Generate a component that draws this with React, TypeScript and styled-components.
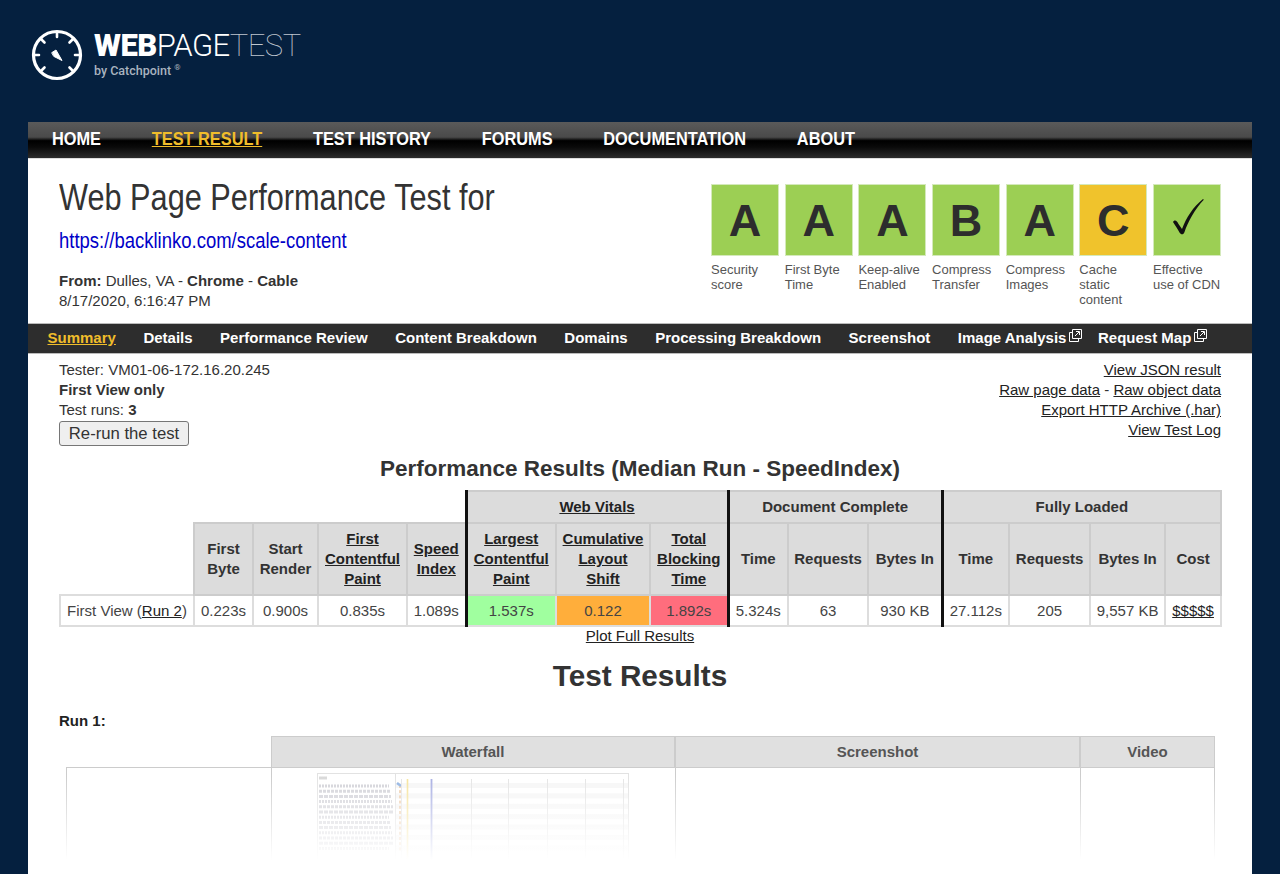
import React from 'react';
import styled, { createGlobalStyle } from 'styled-components';

const Global = createGlobalStyle`
  html, body { margin: 0; padding: 0; height: 874px; overflow: hidden; background: #05203f; }
  body { font-family: "Liberation Sans", Arial, sans-serif; color: #333; }
  * { box-sizing: border-box; }
  a { color: inherit; }
`;

const Page = styled.div`
  width: 1280px;
  height: 874px;
  overflow: hidden;
  padding: 0 28px;
`;

const Masthead = styled.header`
  height: 122px;
  padding: 29px 0 0 3px;
  display: flex;
  align-items: flex-start;
  gap: 11px;
`;

const LogoText = styled.div`
  display: flex;
  flex-direction: column;
  margin-top: 1px;
`;

const Wordmark = styled.div`
  font-family: Roboto, sans-serif;
  font-size: 31px;
  line-height: 32px;
  letter-spacing: -0.52px;
  color: #fff;
  white-space: nowrap;
`;
const WordBold = styled.span`font-weight: 900;`;
const WordLight = styled.span`font-weight: 300;`;
const WordThin = styled.span`font-weight: 100; color: #c0c7d0;`;

const ByLine = styled.div`
  font-family: Roboto, sans-serif;
  font-size: 12.5px;
  line-height: 14px;
  font-weight: 500;
  color: #a9b3bf;
  margin-top: 2px;
`;
const Reg = styled.sup`
  font-size: 8px;
  line-height: 0;
  font-weight: 400;
  margin-left: 3px;
`;

const TopNav = styled.nav`
  height: 37px;
  padding: 0 0 2px 24px;
  display: flex;
  align-items: center;
  background: linear-gradient(#5a5a5a 0%, #4a4a4a 42%, #000 52%, #0a0a0a 70%, #2c2c2c 100%);
  border-bottom: 1px solid #ddd;
`;

const TopRow = styled.div`
  display: flex;
  gap: 59px;
  transform: scaleX(0.86);
  transform-origin: left center;
`;

const TopLink = styled.a<{ $active?: boolean }>`
  font-size: 19px;
  line-height: 24px;
  font-weight: 700;
  color: ${p => (p.$active ? '#f0bd2b' : '#fff')};
  text-decoration: ${p => (p.$active ? 'underline' : 'none')};
  white-space: nowrap;
`;

const Card = styled.main`
  background: #fff;
  height: 715px;
  overflow: hidden;
  position: relative;
`;

const Summary = styled.section`
  height: 164px;
  padding: 18px 31px 0;
  display: flex;
  justify-content: space-between;
`;

const TestInfo = styled.div``;

const Title = styled.h1`
  margin: 0;
  font-size: 36px;
  line-height: 42px;
  font-weight: 400;
  color: #333;
  white-space: nowrap;
  transform: scaleX(0.853);
  transform-origin: left center;
`;

const TestUrl = styled.a`
  display: block;
  margin-top: 9px;
  font-size: 22px;
  line-height: 26px;
  color: #0000c8;
  text-decoration: none;
  white-space: nowrap;
  transform: scaleX(0.84);
  transform-origin: left center;
`;

const Meta = styled.div`
  font-size: 15px;
  line-height: 20px;
  color: #333;
`;
const MetaFirst = styled(Meta)`margin-top: 17px;`;

const Grades = styled.div`
  display: flex;
  gap: 5.67px;
  margin-top: 7px;
`;

const Grade = styled.div`
  width: 68px;
  font-size: 13px;
  line-height: 15px;
  color: #555;
`;

const GradeBox = styled.div<{ $tone: string }>`
  height: 72px;
  margin-bottom: 6px;
  background: ${p => p.$tone};
  border: 1px solid #d4e9bb;
  display: flex;
  align-items: center;
  justify-content: center;
  font-size: 45px;
  font-weight: 700;
  color: #2d2d2d;
`;

const SubNav = styled.nav`
  height: 31px;
  padding: 0 0 1px 19.5px;
  display: flex;
  align-items: center;
  gap: 27.5px;
  background: #2d2d2d;
  border-top: 1px solid #bbb;
  border-bottom: 1px solid #bbb;
`;

const SubLink = styled.a<{ $active?: boolean; $tight?: boolean }>`
  display: inline-flex;
  align-items: flex-start;
  gap: 3px;
  font-size: 15px;
  line-height: 18px;
  font-weight: 700;
  color: ${p => (p.$active ? '#f0bd2b' : '#fff')};
  text-decoration: ${p => (p.$active ? 'underline' : 'none')};
  white-space: nowrap;
  ${p => (p.$tight ? 'margin-left: -12px;' : '')}
`;

const Options = styled.section`
  padding: 6px 31px 0;
  display: flex;
  justify-content: space-between;
`;

const OptionLine = styled.div`
  font-size: 15px;
  line-height: 20px;
  color: #333;
`;

const OptionLinks = styled(OptionLine)`
  text-align: right;
  a { color: #222; }
`;

const Rerun = styled.button`
  display: block;
  margin-top: 1px;
  width: 130px;
  height: 25px;
  padding: 0;
  font-family: inherit;
  font-size: 16.7px;
  color: #333;
  background: #efefef;
  border: 1px solid #767676;
  border-radius: 3px;
`;

const ResultsTitle = styled.h2`
  margin: 8px 0 0;
  height: 32px;
  text-align: center;
  font-size: 22.5px;
  line-height: 30px;
  font-weight: 700;
  color: #333;
`;

const Results = styled.table`
  margin: 4px 0 0 31px;
  width: 1161px;
  table-layout: fixed;
  border-collapse: collapse;
  font-size: 15px;
  color: #444;
`;

const Th = styled.th<{ $thick?: boolean; $h: number; $blank?: boolean }>`
  height: ${p => p.$h}px;
  padding: 0;
  background: ${p => (p.$blank ? 'transparent' : '#dcdcdc')};
  border: ${p => (p.$blank ? 'none' : '2px solid #ccc')};
  ${p => (p.$thick ? 'border-left: 3px solid #111;' : '')}
  font-weight: 700;
  line-height: 20px;
  text-align: center;
  color: #333;
  a { color: #222; }
`;

const Td = styled.td<{ $thick?: boolean; $bg?: string }>`
  height: 31px;
  padding: 0;
  text-align: center;
  background: ${p => p.$bg || '#fff'};
  border: 2px solid #ddd;
  ${p => (p.$thick ? 'border-left: 3px solid #111;' : '')}
  white-space: nowrap;
  a { color: #222; }
`;

const PlotLink = styled.div`
  text-align: center;
  font-size: 15px;
  line-height: 20px;
  margin-top: -1px;
  a { color: #222; }
`;

const BigTitle = styled.h1`
  margin: 11px 0 0;
  text-align: center;
  font-size: 29.7px;
  line-height: 38px;
  font-weight: 700;
  color: #333;
`;

const RunLabel = styled.div`
  margin: 16px 0 0 31px;
  font-size: 15px;
  line-height: 20px;
  font-weight: 700;
  color: #222;
`;

const RunGrid = styled.div`
  margin: 5px 0 0 38px;
  width: 1149px;
  display: grid;
  grid-template-columns: 205px 404px 405px 135px;
  grid-template-rows: 32px 110px;
`;

const RunBlank = styled.div``;

const RunHead = styled.div`
  background: #e0e0e0;
  border: 1px solid #ccc;
  padding-bottom: 1px;
  display: flex;
  align-items: center;
  justify-content: center;
  font-size: 15px;
  font-weight: 700;
  color: #555;
`;

const RunCell = styled.div`
  border-left: 1px solid #ccc;
  display: flex;
  justify-content: center;
  padding-top: 5px;
`;

const RunLead = styled(RunCell)`
  border-top: 1px solid #ccc;
  margin-top: -1px;
`;

const RunCellEnd = styled(RunCell)`
  border-right: 1px solid #ccc;
`;

const Fade = styled.div`
  position: absolute;
  left: 0;
  right: 0;
  bottom: 0;
  height: 100px;
  background: linear-gradient(rgba(255,255,255,0), #fff 86%);
`;

const Gauge = () => (
  <svg width="52" height="52" viewBox="0 0 52 52" fill="none" stroke="#fff" strokeWidth="3.2" strokeLinecap="round" style={{ flex: 'none' }}>
    <circle cx="26" cy="26" r="23.5" />
    <path d="M26 3v5M10 10l3.5 3.5M42 10l-3.5 3.5M3 26h5M44 26h5M10 42l3.5-3.5M42 42l-3.5-3.5" strokeWidth="2.6" />
    <path d="M21 23.5L25 21l6 10.5-8-4z" fill="#fff" stroke="#fff" strokeWidth="1" strokeLinejoin="round" />
  </svg>
);

const External = () => (
  <svg width="13" height="13" viewBox="0 0 13 13" fill="none" stroke="#fff" strokeWidth="1">
    <path d="M3.5 3.5h-3v9h9v-3" />
    <path d="M3.5 9.5v-9h9v9h-9" />
    <path d="M6 7l4-4M7 2.5h3.5V6" />
  </svg>
);

const Check = () => (
  <svg width="34" height="44" viewBox="0 0 34 44" role="img" aria-label="✓">
    <path d="M3 24C5 21 7 23 8.500 26L12 31C16 20 23 9 33 1L33.800 1.800C25 11 18 24 14.500 34C13.500 37 11 37 9.500 34.500C7.500 31 5 27 3 24z" fill="#111" />
  </svg>
);

const Waterfall = () => {
  const rows = Array.from({ length: 13 }, (_, i) => i);
  return (
    <svg width="314" height="94" viewBox="0 0 314 94" fill="none" style={{ marginLeft: 1 }}>
      <rect x="0.5" y="0.5" width="311" height="92" stroke="#e2e2e2" />
      <path d="M78.5 0v93" stroke="#e2e2e2" />
      <path d="M2 5h8" stroke="#d8d8d8" strokeWidth="3" />
      {rows.map(i => (
        <g key={i}>
          <path d={`M2 ${13 + i * 5.2}h${70 + (i * 7) % 6}`} stroke="#d2d2d8" strokeWidth="3" strokeDasharray={`${2 + (i % 3)} 1`} />
          {i % 2 === 0 && <rect x="79" y={10 + i * 5.2} width="232" height="5" fill="#f6f6f6" />}
          <rect x="82" y={12 + i * 5.2} width="2.5" height="3" fill="#efcfae" />
        </g>
      ))}
      <path d="M80 10l4 3" stroke="#8fb2e2" strokeWidth="2.5" />
      <path d="M90.5 6v86" stroke="#f6e39a" strokeWidth="1.6" />
      <path d="M114.5 6v86" stroke="#a8aee2" strokeWidth="1.800" />
      {[84, 154, 191, 230, 268, 306].map(x => (
        <path key={x} d={`M${x}.5 6v86`} stroke="#e4e4e4" />
      ))}
    </svg>
  );
};

const grades: { letter: React.ReactNode; tone: string; label: string[] }[] = [
  { letter: 'A', tone: '#9ccf54', label: ['Security', 'score'] },
  { letter: 'A', tone: '#9ccf54', label: ['First Byte', 'Time'] },
  { letter: 'A', tone: '#9ccf54', label: ['Keep-alive', 'Enabled'] },
  { letter: 'B', tone: '#9ccf54', label: ['Compress', 'Transfer'] },
  { letter: 'A', tone: '#9ccf54', label: ['Compress', 'Images'] },
  { letter: 'C', tone: '#f0c32c', label: ['Cache', 'static', 'content'] },
  { letter: <Check />, tone: '#9ccf54', label: ['Effective', 'use of CDN'] },
];

const widths = [134, 59, 65, 89, 59, 90, 94, 78, 60, 80, 74, 67, 81, 75, 56];

const Lines = ({ items }: { items: string[] }) => (
  <>
    {items.map((t, i) => (
      <React.Fragment key={t}>
        {i > 0 && <br />}
        {t}
      </React.Fragment>
    ))}
  </>
);

export default function App() {
  return (
    <Page>
      <Global />
      <Masthead>
        <Gauge />
        <LogoText>
          <Wordmark>
            <WordBold>WEB</WordBold>
            <WordLight>PAGE</WordLight>
            <WordThin>TEST</WordThin>
          </Wordmark>
          <ByLine>
            by Catchpoint<Reg>®</Reg>
          </ByLine>
        </LogoText>
      </Masthead>
      <TopNav>
        <TopRow>
          <TopLink href="#">HOME</TopLink>
          <TopLink href="#" $active>TEST RESULT</TopLink>
          <TopLink href="#">TEST HISTORY</TopLink>
          <TopLink href="#">FORUMS</TopLink>
          <TopLink href="#">DOCUMENTATION</TopLink>
          <TopLink href="#">ABOUT</TopLink>
        </TopRow>
      </TopNav>
      <Card>
        <Summary>
          <TestInfo>
            <Title>Web Page Performance Test for</Title>
            <TestUrl href="#">https://backlinko.com/scale-content</TestUrl>
            <MetaFirst>
              <b>From:</b> Dulles, VA - <b>Chrome</b> - <b>Cable</b>
            </MetaFirst>
            <Meta>8/17/2020, 6:16:47 PM</Meta>
          </TestInfo>
          <Grades>
            {grades.map(g => (
              <Grade key={g.label.join(' ')}>
                <GradeBox $tone={g.tone}>{g.letter}</GradeBox>
                <Lines items={g.label} />
              </Grade>
            ))}
          </Grades>
        </Summary>
        <SubNav>
          <SubLink href="#" $active>Summary</SubLink>
          <SubLink href="#">Details</SubLink>
          <SubLink href="#">Performance Review</SubLink>
          <SubLink href="#">Content Breakdown</SubLink>
          <SubLink href="#">Domains</SubLink>
          <SubLink href="#">Processing Breakdown</SubLink>
          <SubLink href="#">Screenshot</SubLink>
          <SubLink href="#">Image Analysis<External /></SubLink>
          <SubLink href="#" $tight>Request Map<External /></SubLink>
        </SubNav>
        <Options>
          <div>
            <OptionLine>Tester: VM01-06-172.16.20.245</OptionLine>
            <OptionLine><b>First View only</b></OptionLine>
            <OptionLine>Test runs: <b>3</b></OptionLine>
            <Rerun>Re-run the test</Rerun>
          </div>
          <OptionLinks>
            <div><a href="#">View JSON result</a></div>
            <div><a href="#">Raw page data</a> - <a href="#">Raw object data</a></div>
            <div><a href="#">Export HTTP Archive (.har)</a></div>
            <div><a href="#">View Test Log</a></div>
          </OptionLinks>
        </Options>
        <ResultsTitle>Performance Results (Median Run - SpeedIndex)</ResultsTitle>
        <Results>
          <colgroup>
            {widths.map((w, i) => <col key={i} width={w} />)}
          </colgroup>
          <thead>
            <tr>
              <Th $h={32} $blank colSpan={5} />
              <Th $h={32} $thick colSpan={3}><a href="#">Web Vitals</a></Th>
              <Th $h={32} $thick colSpan={3}>Document Complete</Th>
              <Th $h={32} $thick colSpan={4}>Fully Loaded</Th>
            </tr>
            <tr>
              <Th $h={72} $blank />
              <Th $h={72}>First<br />Byte</Th>
              <Th $h={72}>Start<br />Render</Th>
              <Th $h={72}><a href="#">First<br />Contentful<br />Paint</a></Th>
              <Th $h={72}><a href="#">Speed<br />Index</a></Th>
              <Th $h={72} $thick><a href="#">Largest<br />Contentful<br />Paint</a></Th>
              <Th $h={72}><a href="#">Cumulative<br />Layout<br />Shift</a></Th>
              <Th $h={72}><a href="#">Total<br />Blocking<br />Time</a></Th>
              <Th $h={72} $thick>Time</Th>
              <Th $h={72}>Requests</Th>
              <Th $h={72}>Bytes In</Th>
              <Th $h={72} $thick>Time</Th>
              <Th $h={72}>Requests</Th>
              <Th $h={72}>Bytes In</Th>
              <Th $h={72}>Cost</Th>
            </tr>
          </thead>
          <tbody>
            <tr>
              <Td>First View (<a href="#">Run 2</a>)</Td>
              <Td>0.223s</Td>
              <Td>0.900s</Td>
              <Td>0.835s</Td>
              <Td>1.089s</Td>
              <Td $thick $bg="#a0ff9f">1.537s</Td>
              <Td $bg="#ffae3b">0.122</Td>
              <Td $bg="#ff6d7d">1.892s</Td>
              <Td $thick>5.324s</Td>
              <Td>63</Td>
              <Td>930 KB</Td>
              <Td $thick>27.112s</Td>
              <Td>205</Td>
              <Td>9,557 KB</Td>
              <Td><a href="#">$$$$$</a></Td>
            </tr>
          </tbody>
        </Results>
        <PlotLink><a href="#">Plot Full Results</a></PlotLink>
        <BigTitle>Test Results</BigTitle>
        <RunLabel>Run 1:</RunLabel>
        <RunGrid>
          <RunBlank />
          <RunHead>Waterfall</RunHead>
          <RunHead>Screenshot</RunHead>
          <RunHead>Video</RunHead>
          <RunLead />
          <RunCell><Waterfall /></RunCell>
          <RunCell />
          <RunCellEnd />
        </RunGrid>
        <Fade />
      </Card>
    </Page>
  );
}
